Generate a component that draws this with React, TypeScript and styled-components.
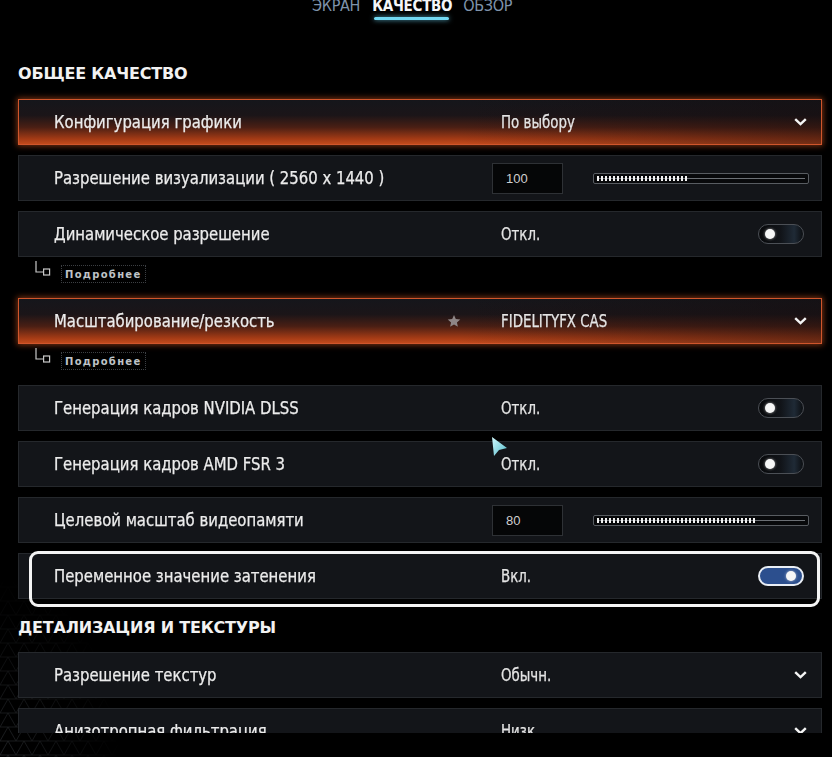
import React from 'react';
import styled, { createGlobalStyle, css } from 'styled-components';

const GlobalStyle = createGlobalStyle`
  html, body {
    margin: 0;
    padding: 0;
    background: #000;
  }
  body {
    font-family: 'DejaVu Sans Condensed', 'DejaVu Sans', sans-serif;
    -webkit-font-smoothing: antialiased;
  }
`;

type Control =
  | { kind: 'select'; value: string }
  | { kind: 'toggle'; value: string; on: boolean }
  | { kind: 'slider'; value: string; fill: number };

interface RowData {
  label: string;
  control: Control;
  hot?: boolean;
  star?: boolean;
  more?: boolean;
  framed?: boolean;
}

const general: RowData[] = [
  { label: 'Конфигурация графики', control: { kind: 'select', value: 'По выбору' }, hot: true },
  { label: 'Разрешение визуализации ( 2560 x 1440 )', control: { kind: 'slider', value: '100', fill: 92 } },
  { label: 'Динамическое разрешение', control: { kind: 'toggle', value: 'Откл.', on: false }, more: true },
  {
    label: 'Масштабирование/резкость',
    control: { kind: 'select', value: 'FIDELITYFX CAS' },
    hot: true,
    star: true,
    more: true
  },
  { label: 'Генерация кадров NVIDIA DLSS', control: { kind: 'toggle', value: 'Откл.', on: false } },
  { label: 'Генерация кадров AMD FSR 3', control: { kind: 'toggle', value: 'Откл.', on: false } },
  { label: 'Целевой масштаб видеопамяти', control: { kind: 'slider', value: '80', fill: 159 } },
  { label: 'Переменное значение затенения', control: { kind: 'toggle', value: 'Вкл.', on: true }, framed: true }
];

const details: RowData[] = [
  { label: 'Разрешение текстур', control: { kind: 'select', value: 'Обычн.' } },
  { label: 'Анизотропная фильтрация', control: { kind: 'select', value: 'Низк.' } }
];

const Chevron = () => (
  <svg width="13" height="8" viewBox="0 0 13 8">
    <path d="M1.2 1.2 L6.5 6.2 L11.8 1.2" fill="none" stroke="#f4f4f4" strokeWidth="2.4" strokeLinejoin="miter" />
  </svg>
);

const Star = () => (
  <svg width="14" height="14" viewBox="0 0 24 24">
    <path
      d="M12 1.5 L15.1 8.6 L22.8 9.3 L17 14.4 L18.7 22 L12 18 L5.3 22 L7 14.4 L1.2 9.3 L8.9 8.6 Z"
      fill="#8e8686"
    />
  </svg>
);

const Connector = () => (
  <svg width="26" height="18" viewBox="0 0 26 18">
    <path d="M1 0 V11 H8" fill="none" stroke="#c9c9c9" strokeWidth="1.2" />
    <rect x="8.6" y="8" width="6" height="6" fill="none" stroke="#c9c9c9" strokeWidth="1.2" />
  </svg>
);

const Cursor = () => (
  <S.Cursor width="20" height="24" viewBox="0 0 20 24">
    <defs>
      <linearGradient id="cur" x1="0" y1="0" x2="1" y2="1">
        <stop offset="0" stopColor="#d4fbff" />
        <stop offset="1" stopColor="#4fb8c8" />
      </linearGradient>
    </defs>
    <polygon points="2,2 17,13 9,15 4,21" fill="url(#cur)" />
  </S.Cursor>
);

// faint triangle mesh in the lower-left corner of the backdrop
const Mesh = () => (
  <S.Mesh width="160" height="240" viewBox="0 0 160 240">
    <defs>
      <pattern id="tri" width="16" height="14" patternUnits="userSpaceOnUse">
        <path d="M0 14 L8 0 L16 14 M0 0 H16 M0 14 H16" fill="none" stroke="#24272b" strokeWidth="0.8" />
      </pattern>
      <radialGradient id="fade" cx="0" cy="1" r="1">
        <stop offset="0" stopColor="#fff" stopOpacity="1" />
        <stop offset="0.75" stopColor="#fff" stopOpacity="0" />
      </radialGradient>
      <mask id="meshMask">
        <rect width="160" height="240" fill="url(#fade)" />
      </mask>
    </defs>
    <rect width="160" height="240" fill="url(#tri)" mask="url(#meshMask)" />
  </S.Mesh>
);

const ControlCell = ({ control }: { control: Control }) => {
  if (control.kind === 'slider') {
    return (
      <S.ValueCell>
        <S.NumberBox>{control.value}</S.NumberBox>
        <S.Track>
          <S.TrackLine />
          <S.TrackFill style={{ width: control.fill }} />
        </S.Track>
      </S.ValueCell>
    );
  }
  if (control.kind === 'toggle') {
    return (
      <S.ValueCell>
        <S.ValueText>{control.value}</S.ValueText>
        <S.Toggle $on={control.on}>
          <S.Knob $on={control.on} />
        </S.Toggle>
      </S.ValueCell>
    );
  }
  return (
    <S.ValueCell>
      <S.ValueText>{control.value}</S.ValueText>
      <S.ChevronBox>
        <Chevron />
      </S.ChevronBox>
    </S.ValueCell>
  );
};

const SettingRow = ({ row }: { row: RowData }) => (
  <S.RowWrap>
    <S.Row $hot={row.hot}>
      <S.LabelCell>
        <S.Label>{row.label}</S.Label>
        {row.star && (
          <S.StarBox>
            <Star />
          </S.StarBox>
        )}
      </S.LabelCell>
      <ControlCell control={row.control} />
    </S.Row>
    {row.framed && <S.Frame />}
    {row.more && (
      <S.MoreRow>
        <Connector />
        <S.MoreButton>Подробнее</S.MoreButton>
      </S.MoreRow>
    )}
  </S.RowWrap>
);

const App = () => {
  return (
    <>
      <GlobalStyle />
      <S.Page>
        <Mesh />
        <S.Tabs>
          <S.Tab>ЭКРАН</S.Tab>
          <S.Tab $active>КАЧЕСТВО</S.Tab>
          <S.Tab>ОБЗОР</S.Tab>
        </S.Tabs>
        <S.Viewport>
          <S.SectionTitle $first>ОБЩЕЕ КАЧЕСТВО</S.SectionTitle>
          {general.map(r => (
            <SettingRow key={r.label} row={r} />
          ))}
          <S.SectionTitle>ДЕТАЛИЗАЦИЯ И ТЕКСТУРЫ</S.SectionTitle>
          {details.map(r => (
            <SettingRow key={r.label} row={r} />
          ))}
        </S.Viewport>
        <S.Footer />
        <Cursor />
      </S.Page>
    </>
  );
};

export default App;

const S = {
  Page: styled.div`
    position: relative;
    width: 832px;
    height: 757px;
    overflow: hidden;
    background: #000;
    display: flex;
    flex-direction: column;
  `,
  Mesh: styled.svg`
    position: absolute;
    left: 0;
    bottom: 0;
    z-index: 0;
  `,
  Tabs: styled.div`
    position: relative;
    z-index: 1;
    display: flex;
    gap: 11px;
    height: 22px;
    padding-left: 312px;
    margin-top: -4px;
    flex-shrink: 0;
  `,
  Tab: styled.div<{ $active?: boolean }>`
    position: relative;
    height: 22px;
    font-size: ${p => (p.$active ? '15px' : '16px')};
    line-height: 20px;
    letter-spacing: -0.3px;
    color: ${p => (p.$active ? '#f4f6f8' : '#7f93ab')};
    font-weight: ${p => (p.$active ? 700 : 400)};
    margin-left: ${p => (p.$active ? '1px' : '0')};
    ${p =>
      p.$active &&
      css`
        &::after {
          content: '';
          position: absolute;
          left: 2px;
          right: 3px;
          top: 21px;
          height: 3px;
          border-radius: 2px;
          background: #72d8f2;
          box-shadow: 0 0 5px rgba(110, 215, 245, 0.8);
        }
      `}
  `,
  Viewport: styled.div`
    position: relative;
    z-index: 1;
    height: 715px;
    overflow: hidden;
    padding: 0 10px 0 18px;
    flex-shrink: 0;
  `,
  Footer: styled.div`
    flex: 1;
  `,
  SectionTitle: styled.div<{ $first?: boolean }>`
    height: 24px;
    line-height: 24px;
    margin: ${p => (p.$first ? '44px 0 13px' : '17px 0 12px')};
    font-family: 'DejaVu Sans', sans-serif;
    font-weight: 700;
    font-size: 16px;
    letter-spacing: -0.2px;
    color: #f2f2f2;
  `,
  RowWrap: styled.div`
    position: relative;
    margin-bottom: 10px;
  `,
  Row: styled.div<{ $hot?: boolean }>`
    display: grid;
    grid-template-columns: 438px 1fr;
    align-items: center;
    height: 46px;
    box-sizing: border-box;
    padding-left: 35px;
    border: 1px solid #25282c;
    background: #131519;
    ${p =>
      p.$hot &&
      css`
        border-color: #d0562c;
        background: linear-gradient(90deg, rgba(10, 10, 12, 0) 0%, rgba(10, 10, 12, 0) 55%, rgba(20, 12, 14, 0.45) 100%),
          linear-gradient(180deg, #15161b 0%, #1b1518 35%, #4a1f14 62%, #a23a15 88%, #c24a1c 100%);
        box-shadow: 0 0 6px 1px rgba(228, 92, 34, 0.55);
      `}
  `,
  LabelCell: styled.div`
    display: flex;
    align-items: center;
    justify-content: space-between;
    padding-right: 31px;
  `,
  Label: styled.div`
    display: inline-block;
    font-size: 17.5px;
    color: #ececec;
    white-space: nowrap;
    -webkit-text-stroke: 0.25px #ececec;
    transform: scaleX(0.945);
    transform-origin: left center;
  `,
  StarBox: styled.div`
    display: flex;
    align-items: center;
  `,
  ValueCell: styled.div`
    display: flex;
    align-items: center;
    justify-content: space-between;
  `,
  ValueText: styled.div`
    display: inline-block;
    margin-left: 9px;
    font-size: 17.5px;
    color: #e4e4e4;
    white-space: nowrap;
    -webkit-text-stroke: 0.25px #e4e4e4;
    transform: scaleX(0.85);
    transform-origin: left center;
  `,
  ChevronBox: styled.div`
    display: flex;
    margin-right: 14px;
  `,
  NumberBox: styled.div`
    width: 71px;
    height: 31px;
    box-sizing: border-box;
    padding-left: 13px;
    line-height: 29px;
    border: 1px solid #2e3135;
    background: #050607;
    font-family: 'Liberation Sans', Arial, sans-serif;
    font-size: 13px;
    color: #cfcfcf;
  `,
  Track: styled.div`
    position: relative;
    width: 216px;
    height: 11px;
    box-sizing: border-box;
    margin-right: 12px;
    border: 1px solid #585c61;
    border-radius: 2px;
    background: #08090b;
  `,
  TrackLine: styled.div`
    position: absolute;
    left: 3px;
    right: 3px;
    top: 4px;
    height: 1px;
    background: #6b6f74;
  `,
  TrackFill: styled.div`
    position: absolute;
    left: 3px;
    top: 2px;
    height: 5px;
    background: repeating-linear-gradient(90deg, #f2f2f2 0 2px, transparent 2px 4px);
  `,
  Toggle: styled.div<{ $on: boolean }>`
    position: relative;
    width: 46px;
    height: 20px;
    box-sizing: border-box;
    margin-right: 17px;
    border-radius: 10px;
    border: 1px solid #4b4f55;
    background: linear-gradient(90deg, #08090b 0%, #111419 50%, #1f2a36 80%, #0c0e11 100%);
    ${p =>
      p.$on &&
      css`
        border: 2px solid #e9eef5;
        background: #2c4f8e;
      `}
  `,
  Knob: styled.div<{ $on: boolean }>`
    position: absolute;
    top: 50%;
    width: 10px;
    height: 10px;
    margin-top: -5px;
    border-radius: 50%;
    background: #f6f6f6;
    box-shadow: 0 0 3px rgba(255, 255, 255, 0.6);
    ${p => (p.$on ? 'right: 6px;' : 'left: 6px;')}
  `,
  Frame: styled.div`
    position: absolute;
    left: 11px;
    right: 2px;
    top: -2px;
    height: 56px;
    box-sizing: border-box;
    border: 3px solid #f4f4f4;
    border-radius: 9px;
    pointer-events: none;
  `,
  MoreRow: styled.div`
    display: flex;
    align-items: flex-start;
    height: 27px;
    margin-top: 4px;
    padding-left: 17px;
  `,
  MoreButton: styled.div`
    margin-top: 4px;
    height: 18px;
    box-sizing: border-box;
    padding: 0 3px 0 3px;
    line-height: 17px;
    border: 1px dotted #3c3f43;
    font-family: 'DejaVu Sans', sans-serif;
    font-weight: 700;
    font-size: 10px;
    letter-spacing: 1.3px;
    color: #bfc3c7;
  `,
  Cursor: styled.svg`
    position: absolute;
    z-index: 2;
    left: 490px;
    top: 435px;
  `
};
